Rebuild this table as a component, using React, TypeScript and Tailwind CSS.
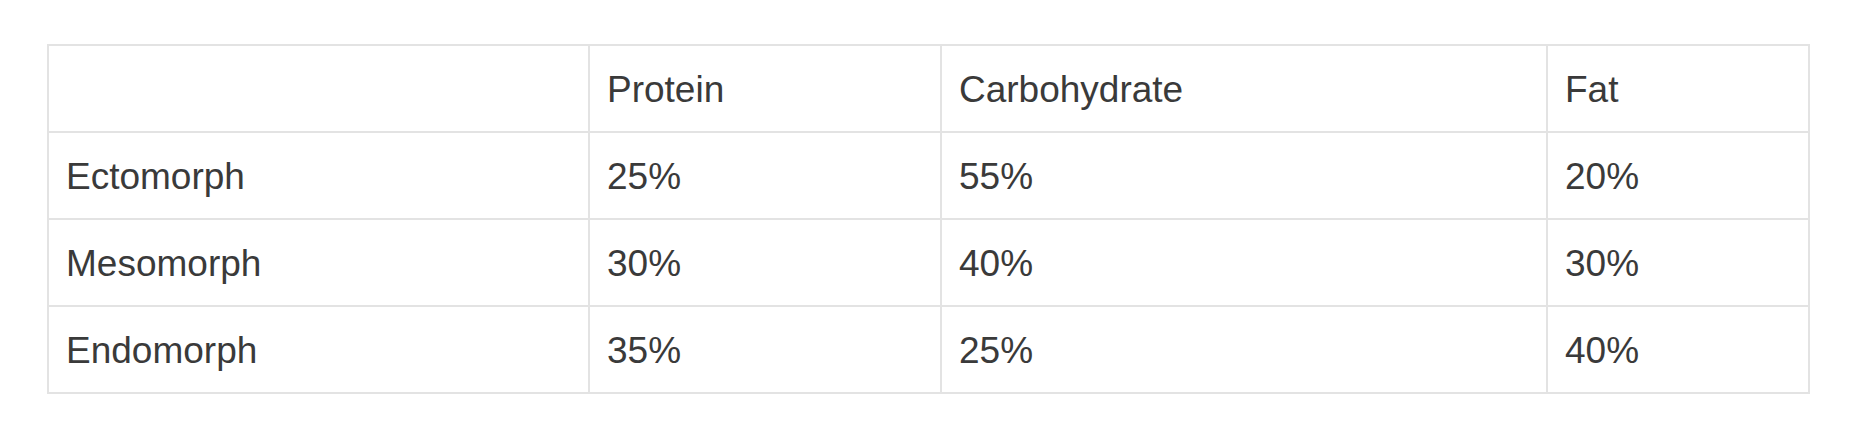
const rows = [
  { name: "Ectomorph", protein: "25%", carbs: "55%", fat: "20%" },
  { name: "Mesomorph", protein: "30%", carbs: "40%", fat: "30%" },
  { name: "Endomorph", protein: "35%", carbs: "25%", fat: "40%" },
];

const cell = "h-[87px] border-2 border-[#e3e3e3] px-[17px] pt-[3px] align-middle";

export default function App() {
  return (
    <div className="h-[435px] w-[1869px] bg-white pl-[47px] pt-[44px] font-['Liberation_Sans',Arial,sans-serif] text-[37px] text-[#3a3a3a]">
      <table className="table-fixed border-collapse">
        <colgroup>
          <col className="w-[541px]" />
          <col className="w-[352px]" />
          <col className="w-[606px]" />
          <col className="w-[262px]" />
        </colgroup>
        <thead>
          <tr className="text-left">
            <th className={`${cell} font-normal`} />
            <th className={`${cell} font-normal`}>Protein</th>
            <th className={`${cell} font-normal`}>Carbohydrate</th>
            <th className={`${cell} font-normal`}>Fat</th>
          </tr>
        </thead>
        <tbody>
          {rows.map((r) => (
            <tr key={r.name}>
              <td className={cell}>{r.name}</td>
              <td className={cell}>{r.protein}</td>
              <td className={cell}>{r.carbs}</td>
              <td className={cell}>{r.fat}</td>
            </tr>
          ))}
        </tbody>
      </table>
    </div>
  );
}
